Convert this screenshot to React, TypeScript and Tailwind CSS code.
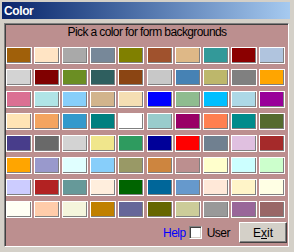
import React from "react";

const rows: string[][] = [
  ["#a0600a", "#ffe4c4", "#a9a9a9", "#778899", "#808000", "#a0522d", "#deb887", "#339999", "#8b0000", "#b0c4de"],
  ["#d3d3d3", "#800000", "#6b8e23", "#2f5f5f", "#8b4513", "#c8c8c8", "#4682b4", "#bdb76b", "#808080", "#ffa500"],
  ["#db7093", "#b0e4e6", "#87cefa", "#d2b48c", "#f5deb3", "#0000ff", "#8fbc8f", "#00bfff", "#add8e6", "#990099"],
  ["#ffe4b5", "#f4a460", "#3399cc", "#008080", "#ffffff", "#99cccc", "#990066", "#ff7f50", "#008b8b", "#556b2f"],
  ["#483d8b", "#696969", "#d3d3d3", "#f0e68c", "#2e9b5f", "#000099", "#ff0000", "#708090", "#e0c0e0", "#a52a2a"],
  ["#ffa500", "#9999cc", "#e0ffff", "#87cefa", "#999966", "#cd853f", "#bc8f8f", "#ffffcc", "#ccffff", "#ccffcc"],
  ["#ccccff", "#b22222", "#669999", "#ffeedd", "#006400", "#006699", "#6699cc", "#ffe8d8", "#fff4c8", "#ffffe4"],
  ["#fffff4", "#ffccaa", "#f5f5dc", "#c08000", "#666699", "#666600", "#cccc99", "#999999", "#996699", "#996666"],
];

export default function App() {
  return (
    <div
      className="w-[294px] h-[252px] bg-[#d4d0c8] pt-[2px] pl-[2px] pr-[4px] flex flex-col overflow-hidden"
      style={{ fontFamily: '"Liberation Sans", Arial, sans-serif' }}
    >
      <div className="h-[17px] bg-linear-to-r from-[#0a246a] to-[#a6caf0] pl-[2px] pt-[2px]">
        <span className="text-white font-bold text-[12px] tracking-[-0.4px] leading-[15px] block">Color</span>
      </div>
      <div className="mt-[4px] ml-[2px] w-[285px] h-[224px] bg-[#bc8f8f] border-t border-l border-[#808080] border-b border-r border-b-white border-r-white shadow-[inset_1px_1px_0_#404040] pt-[1px] pl-[1px] flex flex-col">
        <div className="text-[12px] leading-[14px] text-black text-center tracking-[-0.6px] h-[14px]">
          Pick a color for form backgrounds
        </div>
        <div className="mt-[8px] grid grid-cols-[repeat(10,26px)] justify-between gap-y-[5px] w-[279px]">
          {rows.flat().map((c, i) => (
            <div key={i} className="h-[17px] border border-white">
              <div
                className="w-full h-full border-r border-b border-[#808080]"
                style={{ backgroundColor: c }}
              />
            </div>
          ))}
        </div>
        <div className="mt-[4px] flex items-center justify-end pr-[1px]">
          <span className="text-[12px] leading-[14px] tracking-[-0.5px] text-[#0000ff]">Help</span>
          <div className="ml-[3px] w-[13px] h-[13px] bg-white border-t border-l border-[#808080] border-b border-r border-b-white border-r-white shadow-[inset_1px_1px_0_#404040,inset_-1px_-1px_0_#d4d0c8]" />
          <span className="ml-[5px] text-[12px] leading-[14px] tracking-[-0.5px] text-black">User</span>
          <button className="ml-[9px] w-[48px] h-[21px] bg-[#d4d0c8] border-t border-l border-white border-b border-r border-b-[#404040] border-r-[#404040] shadow-[inset_-1px_-1px_0_#808080] text-[12px] leading-[14px] text-black flex items-center justify-center">
            <span>
              E<span className="underline">x</span>it
            </span>
          </button>
        </div>
      </div>
    </div>
  );
}
